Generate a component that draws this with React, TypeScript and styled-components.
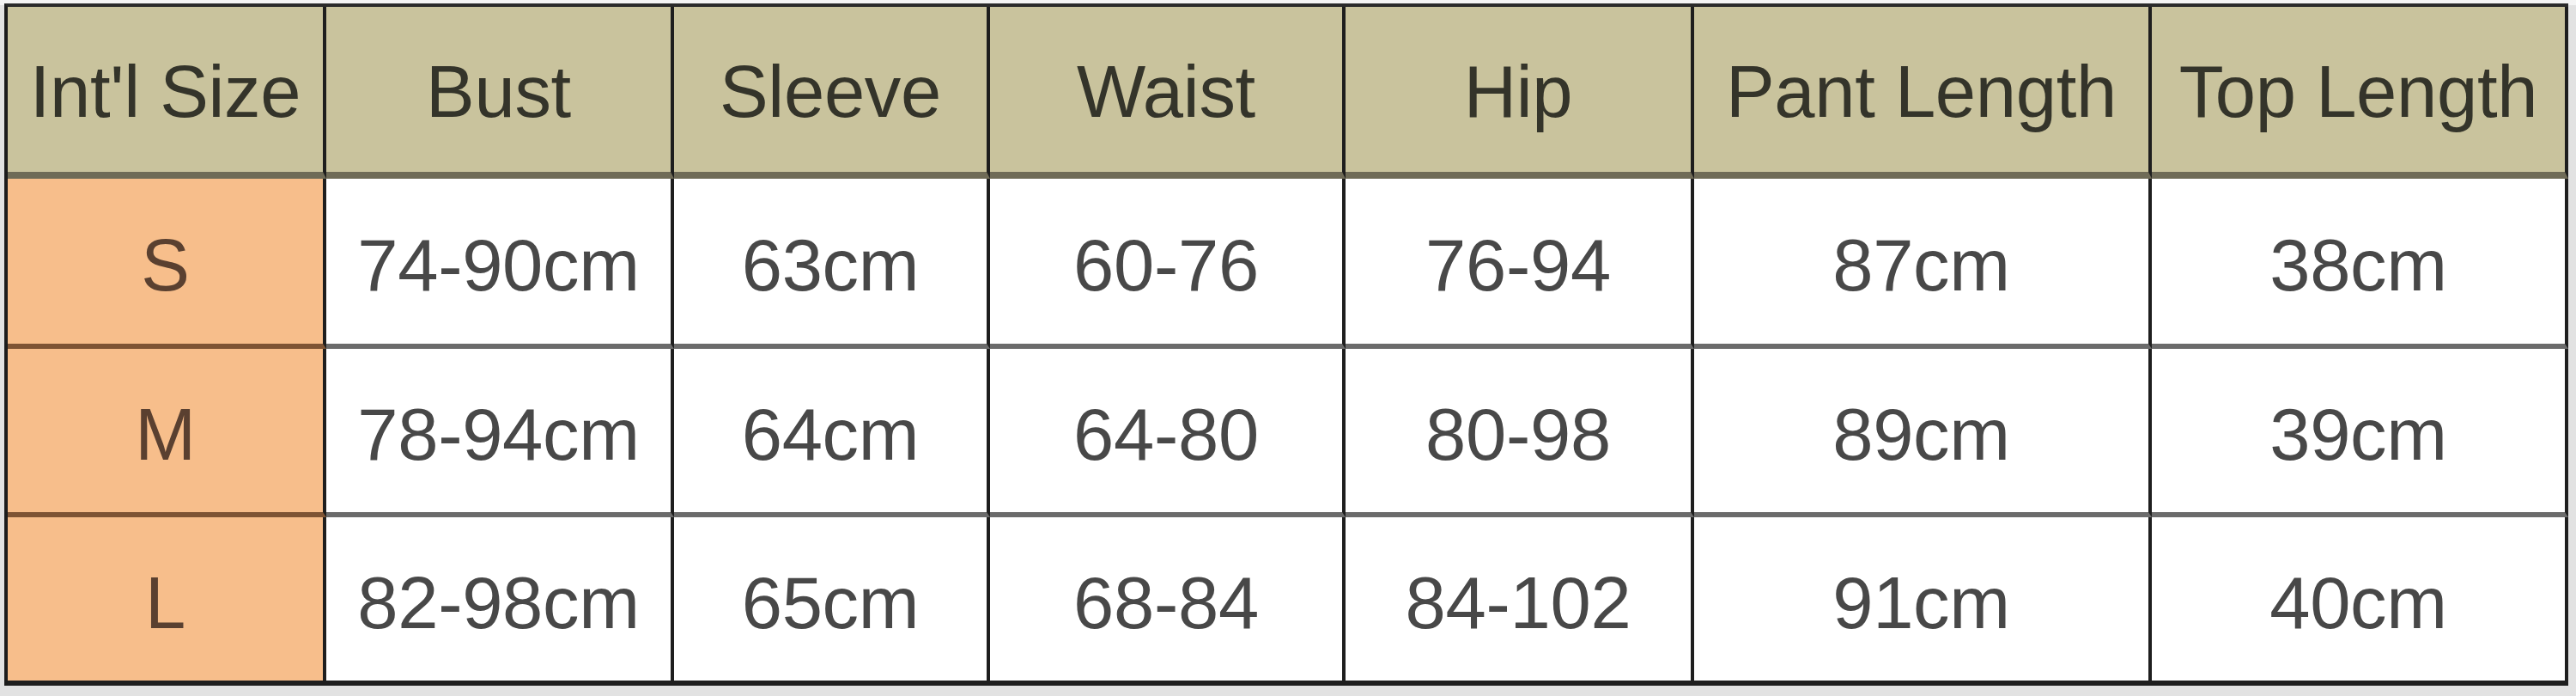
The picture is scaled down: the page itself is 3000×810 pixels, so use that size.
import React from "react";
import styled, { createGlobalStyle } from "styled-components";

const GlobalStyle = createGlobalStyle`
  html, body {
    margin: 0;
    padding: 0;
    background: #e6e6e6;
  }
  body {
    font-family: "Liberation Sans", Arial, sans-serif;
  }
`;

const Page = styled.div`
  width: 3000px;
  height: 810px;
  padding: 4px 0 0 5px;
  box-sizing: border-box;
  background: linear-gradient(#f4f4f4 0 6px, #e2e2e2 6px);
`;

const Table = styled.div`
  display: grid;
  grid-template-columns: 371px 405px 368px 414px 406px 533px 485px;
  grid-template-rows: 200px 198px 196px 196px;
  width: max-content;
  border-left: 4px solid #1c1c1c;
  border-top: 4px solid #2a2a2a;
  background: #ffffff;
`;

const Cell = styled.div`
  display: flex;
  align-items: center;
  justify-content: center;
  box-sizing: border-box;
  border-right: 4px solid #1e1e1e;
  font-size: 85px;
  line-height: 1;
  white-space: nowrap;
  letter-spacing: -0.3px;
`;

const HeaderCell = styled(Cell)`
  background: #c9c39d;
  color: #34342a;
  border-bottom: 8px solid #6f6b57;
  padding-top: 4px;
`;

const SizeCell = styled(Cell)<{ $last?: boolean }>`
  background: #f7be8b;
  color: #5a4030;
  border-bottom: ${(p) => (p.$last ? "6px solid #1e1e1e" : "6px solid #7e5434")};
  padding-top: 8px;
`;

const DataCell = styled(Cell)<{ $last?: boolean }>`
  background: #ffffff;
  color: #484848;
  border-bottom: ${(p) => (p.$last ? "6px solid #1e1e1e" : "6px solid #6b6b6b")};
  padding-top: 8px;
`;

const headers = ["Int'l Size", "Bust", "Sleeve", "Waist", "Hip", "Pant Length", "Top Length"];

const rows = [
  ["S", "74-90cm", "63cm", "60-76", "76-94", "87cm", "38cm"],
  ["M", "78-94cm", "64cm", "64-80", "80-98", "89cm", "39cm"],
  ["L", "82-98cm", "65cm", "68-84", "84-102", "91cm", "40cm"],
];

export default function App() {
  return (
    <>
      <GlobalStyle />
      <Page>
        <Table>
          {headers.map((h) => (
            <HeaderCell key={h}>{h}</HeaderCell>
          ))}
          {rows.map((row, ri) =>
            row.map((v, ci) =>
              ci === 0 ? (
                <SizeCell key={`${ri}-${ci}`} $last={ri === rows.length - 1}>
                  {v}
                </SizeCell>
              ) : (
                <DataCell key={`${ri}-${ci}`} $last={ri === rows.length - 1}>
                  {v}
                </DataCell>
              )
            )
          )}
        </Table>
      </Page>
    </>
  );
}
